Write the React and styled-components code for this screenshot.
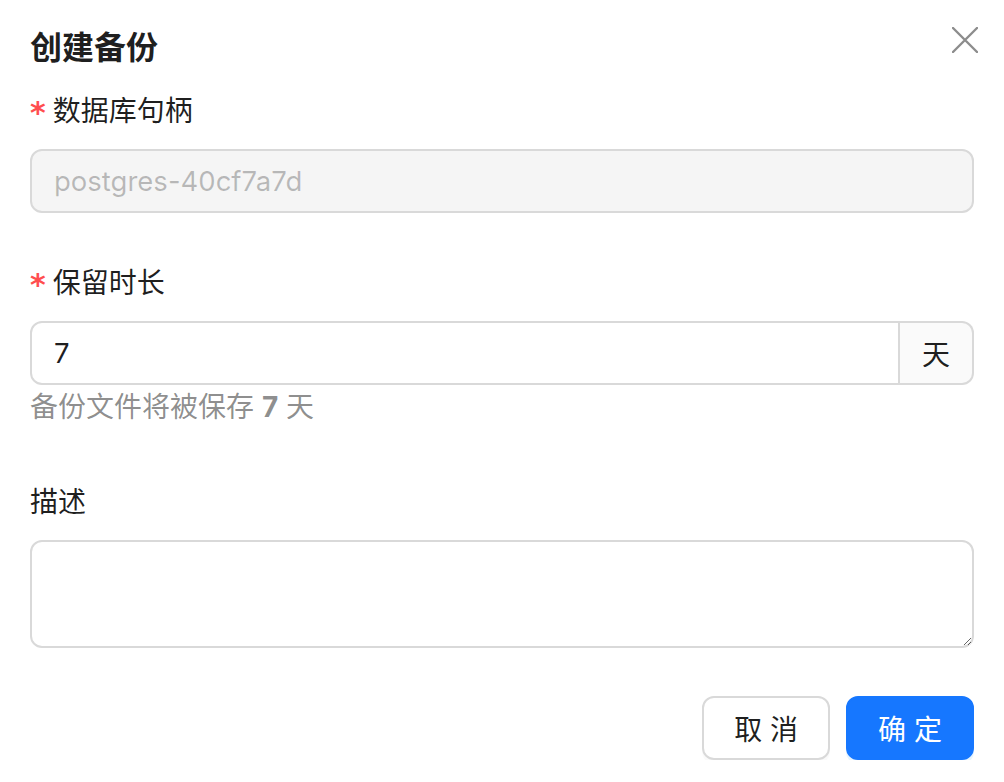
import React from "react";
import styled, { createGlobalStyle } from "styled-components";

const GlobalStyle = createGlobalStyle`
  body {
    margin: 0;
    background: #ffffff;
    font-family: Inter, "Noto Sans CJK SC", sans-serif;
    color: rgba(0, 0, 0, 0.88);
  }
  * { box-sizing: border-box; }
`;

const Dialog = styled.div`
  padding: 24px 30px 0 30px;
`;

const Header = styled.div`
  display: flex;
  justify-content: space-between;
  align-items: flex-start;
  height: 48px;
  margin-bottom: 17px;
`;

const Title = styled.h2`
  margin: 0;
  font-size: 32px;
  line-height: 48px;
  font-weight: 600;
  color: rgba(0, 0, 0, 0.88);
`;

const CloseButton = styled.button`
  width: 28px;
  height: 28px;
  margin-top: 2px;
  margin-right: -5px;
  padding: 0;
  border: none;
  background: transparent;
  display: flex;
  align-items: center;
  justify-content: center;
  color: rgba(0, 0, 0, 0.45);
  cursor: pointer;
`;

const Field = styled.div`
  margin-bottom: ${(p) => p.$gap ?? 48}px;
`;

const Label = styled.label`
  display: flex;
  align-items: center;
  height: 44px;
  margin-bottom: 16px;
  font-size: 28px;
  line-height: 44px;
  color: rgba(0, 0, 0, 0.88);
`;

const Required = styled.span`
  color: #ff4d4f;
  font-size: 30px;
  font-weight: 600;
  line-height: 1;
  margin-right: 7px;
  margin-top: 4px;
  font-family: "DejaVu Sans", sans-serif;
`;

const Input = styled.input`
  display: block;
  width: 100%;
  height: 64px;
  padding: 0 22px;
  font-family: Inter, "Noto Sans CJK SC", sans-serif;
  font-size: 27.5px;
  color: ${(p) => (p.disabled ? "rgba(0, 0, 0, 0.25)" : "rgba(0, 0, 0, 0.88)")};
  -webkit-text-fill-color: ${(p) => (p.disabled ? "rgba(0, 0, 0, 0.25)" : "rgba(0, 0, 0, 0.88)")};
  background: ${(p) => (p.disabled ? "rgba(0, 0, 0, 0.04)" : "#ffffff")};
  border: 2px solid #d9d9d9;
  border-radius: ${(p) => (p.$grouped ? "12px 0 0 12px" : "12px")};
  outline: none;
`;

const Group = styled.div`
  display: flex;
  width: 100%;
`;

const Addon = styled.span`
  display: flex;
  align-items: center;
  justify-content: center;
  padding: 0 22px;
  height: 64px;
  font-size: 28px;
  color: rgba(0, 0, 0, 0.88);
  background: rgba(0, 0, 0, 0.02);
  border: 2px solid #d9d9d9;
  border-left-width: 0;
  border-radius: 0 12px 12px 0;
  flex-shrink: 0;
`;

const GroupInput = styled(Input)`
  flex: 1;
`;

const Help = styled.div`
  font-size: 28px;
  line-height: 44px;
  color: rgba(0, 0, 0, 0.45);

  b {
    font-weight: 700;
  }
`;

const TextArea = styled.textarea`
  display: block;
  width: 100%;
  height: 108px;
  padding: 8px 22px;
  font-family: Inter, "Noto Sans CJK SC", sans-serif;
  font-size: 28px;
  border: 2px solid #d9d9d9;
  border-radius: 12px;
  resize: vertical;
  outline: none;
`;

const Footer = styled.div`
  display: flex;
  justify-content: flex-end;
  gap: 16px;
  margin-top: 48px;
`;

const Button = styled.button`
  height: 64px;
  padding: 0 30px;
  font-family: Inter, "Noto Sans CJK SC", sans-serif;
  font-size: 28px;
  border-radius: 12px;
  cursor: pointer;
  border: 2px solid ${(p) => (p.$primary ? "#1677ff" : "#d9d9d9")};
  background: ${(p) => (p.$primary ? "#1677ff" : "#ffffff")};
  color: ${(p) => (p.$primary ? "#ffffff" : "rgba(0, 0, 0, 0.88)")};
  box-shadow: ${(p) => (p.$primary ? "0 4px 0 rgba(5, 145, 255, 0.1)" : "0 4px 0 rgba(0, 0, 0, 0.02)")};
`;

const CloseIcon = () => (
  <svg width="26" height="26" viewBox="0 0 26 26" fill="none">
    <path d="M1 1 L25 25 M25 1 L1 25" stroke="currentColor" strokeWidth="2.4" strokeLinecap="round" />
  </svg>
);

export default function App() {
  return (
    <Dialog>
      <GlobalStyle />
      <Header>
        <Title>创建备份</Title>
        <CloseButton aria-label="关闭">
          <CloseIcon />
        </CloseButton>
      </Header>

      <Field>
        <Label><Required>*</Required>数据库句柄</Label>
        <Input disabled defaultValue="postgres-40cf7a7d" />
      </Field>

      <Field $gap={51}>
        <Label><Required>*</Required>保留时长</Label>
        <Group>
          <GroupInput $grouped defaultValue="7" />
          <Addon>天</Addon>
        </Group>
        <Help>备份文件将被保存 <b>7</b> 天</Help>
      </Field>

      <Field $gap={0}>
        <Label>描述</Label>
        <TextArea />
      </Field>

      <Footer>
        <Button>取 消</Button>
        <Button $primary>确 定</Button>
      </Footer>
    </Dialog>
  );
}
